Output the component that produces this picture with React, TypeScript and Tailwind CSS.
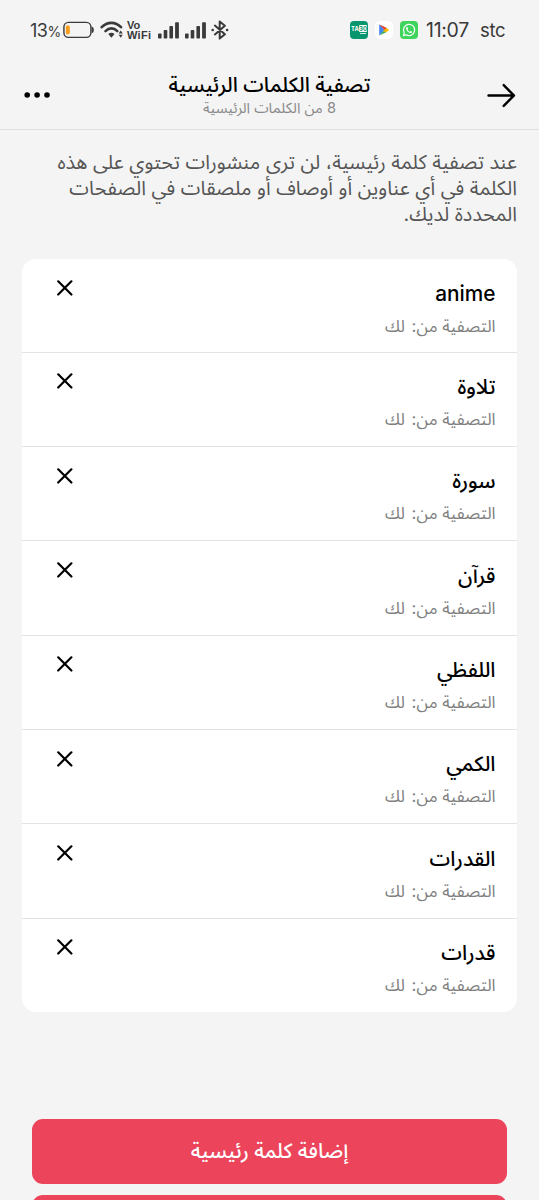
interface Keyword {
  id: number
  word: string
}

const keywords: Keyword[] = [
  { id: 1, word: 'anime' },
  { id: 2, word: 'تلاوة' },
  { id: 3, word: 'سورة' },
  { id: 4, word: 'قرآن' },
  { id: 5, word: 'اللفظي' },
  { id: 6, word: 'الكمي' },
  { id: 7, word: 'القدرات' },
  { id: 8, word: 'قدرات' },
]

const descriptionLines = [
  'عند تصفية كلمة رئيسية، لن ترى منشورات تحتوي على هذه',
  'الكلمة في أي عناوين أو أوصاف أو ملصقات في الصفحات',
  'المحددة لديك.',
]

function Signal() {
  return (
    <svg className="w-[21px] h-[17px]" viewBox="0 0 21 17" fill="#3a3a3a">
      <rect x="0" y="11.5" width="3.6" height="5" rx="0.8" />
      <rect x="5.7" y="8" width="3.6" height="8.5" rx="0.8" />
      <rect x="11.4" y="4" width="3.6" height="12.5" rx="0.8" />
      <rect x="17.1" y="0.3" width="3.8" height="16.2" rx="0.8" />
    </svg>
  )
}

function StatusBar() {
  return (
    <div className="h-[60px] pl-[30px] pr-[34px] flex items-center justify-between text-[#3a3a3a]">
      <div className="flex items-center">
        <span className="w-[33px] pt-px text-[18px] leading-none whitespace-nowrap tracking-[-0.5px]">
          13<span className="text-[14px] tracking-[-1px]">%</span>
        </span>
        <svg className="w-[31px] h-[18px]" viewBox="0 0 31 18" fill="none">
          <rect x="0.9" y="1.4" width="27" height="15" rx="4.6" stroke="#3a3a3a" strokeWidth="1.4" />
          <rect x="2.8" y="4.2" width="4" height="9.4" rx="2" fill="#f99d1c" />
          <path d="M28.6 5.6c1.6.4 2.2 1.6 2.2 3.3s-.6 2.9-2.2 3.3z" fill="#3a3a3a" />
        </svg>
        <svg className="ml-[6px] w-[24px] h-[18px]" viewBox="0 0 24 18" fill="none">
          <path d="M1.7 6.2C7.2.4 15.5.4 21 6.2" stroke="#3a3a3a" strokeWidth="2.6" strokeLinecap="round" />
          <path d="M5.5 10.1c3.6-3.6 8.3-3.6 11.8 0" stroke="#3a3a3a" strokeWidth="2.6" strokeLinecap="round" />
          <path d="M8.3 13c1.9-1.7 4.3-1.7 6.2 0l-3.1 3.8z" fill="#3a3a3a" />
          <path d="M18.6 12.4l2.1-2.8 2.1 2.8zM18.6 13.7l2.1 3 2.1-3z" fill="#3a3a3a" />
        </svg>
        <span className="ml-[3px] w-[26px] flex flex-col text-[11px] leading-[10.5px] font-bold whitespace-nowrap font-['Liberation_Sans',sans-serif]">
          <span>Vo</span>
          <span className="tracking-[0.3px]">WiFi</span>
        </span>
        <div className="ml-[5px] flex gap-[6px]">
          <Signal />
          <Signal />
        </div>
        <svg className="ml-[5px] w-[18px] h-[20px]" viewBox="0 0 18 20" fill="none">
          <path d="M3.9 5.6l10 8.7L8.7 18.6V1.4l5.2 4.3-10 8.7" stroke="#3a3a3a" strokeWidth="2" strokeLinejoin="round" strokeLinecap="round" />
          <circle cx="1.7" cy="10" r="1.3" fill="#3a3a3a" />
          <circle cx="16.1" cy="10" r="1.3" fill="#3a3a3a" />
        </svg>
      </div>

      <div className="flex items-center">
        <span className="w-[18px] h-[18px] rounded-[4px] bg-[#07966e] flex flex-col items-center justify-center font-bold text-white leading-none">
          <span className="text-[6px] leading-[6px] whitespace-nowrap">
            TA<span className="bg-white text-[#07966e] rounded-[1px]">30</span>
          </span>
          <span className="ml-[7px] w-[6px] h-px mt-px bg-white/80" />
        </span>
        <span className="ml-[7px] w-[18px] h-[18px] rounded-[5px] bg-white flex items-center justify-center">
          <svg className="w-[12px] h-[12px]" viewBox="0 0 12 12">
            <path d="M1.2.4v11.2L6.4 6z" fill="#4285f4" />
            <path d="M1.2.4L6.4 6l2.2-2z" fill="#4a8df0" />
            <path d="M1.2 11.6L6.4 6l2.2 2z" fill="#34a853" />
            <path d="M5 4.4L6.4 6 5 7.6 8.6 8l2.6-2-2.6-2-3.4-1.600z" fill="#fbbc04" />
            <path d="M1.2.4l7.400 3.600L6.400 6z" fill="#ea4335" />
          </svg>
        </span>
        <span className="ml-[7px] w-[18px] h-[18px] rounded-[4px] bg-[#3fd45c] flex items-center justify-center">
          <svg className="w-[14px] h-[14px]" viewBox="0 0 24 24" fill="none">
            <path d="M2.4 21.6l1.4-5a9.6 9.6 0 1 1 3.6 3.6z" stroke="#fff" strokeWidth="2" strokeLinejoin="round" />
            <path d="M8.3 6.8c-.8.3-1.5 1.2-1.4 2.5.3 3.8 4 7.4 7.7 7.9 1.5.1 2.6-.7 2.8-2.2l-2.7-1.5-1.3 1.4c-1.8-.7-3.2-2.1-4-3.9l1.1-1.3-1.2-2.8z" fill="#fff" />
          </svg>
        </span>
        <span className="ml-[8px] w-[43px] pt-[2px] text-[19.5px] leading-none whitespace-nowrap tracking-[-0.3px]">11:07</span>
        <span className="ml-[11px] w-[25px] pt-px text-[18.5px] leading-none tracking-[-0.3px]">stc</span>
      </div>
    </div>
  )
}

function Header() {
  return (
    <header className="h-[70px] pl-[24px] pr-[23px] flex items-center justify-between border-b border-[#e0e0e0]">
      <button aria-label="رجوع" className="w-[29px]">
        <svg className="w-[29px] h-[26px]" viewBox="0 0 29 26" fill="none" stroke="#000" strokeWidth="2.4" strokeLinecap="round" strokeLinejoin="round">
          <path d="M1.5 13.5H27M16.7 3.1L27 13.5 16.7 23.9" />
        </svg>
      </button>
      <div className="pt-[2px] pl-px flex flex-col items-center whitespace-nowrap">
        <h1 className="text-[20.6px] leading-[25px] text-black font-medium">تصفية الكلمات الرئيسية</h1>
        <p className="text-[14.6px] leading-[22px] text-[#8a8a8a]">8 من الكلمات الرئيسية</p>
      </div>
      <button aria-label="المزيد" className="w-[27px]">
        <svg className="w-[27px] h-[6px]" viewBox="0 0 27 6">
          <circle cx="3.2" cy="3" r="2.8" />
          <circle cx="13.1" cy="3" r="2.8" />
          <circle cx="23" cy="3" r="2.8" />
        </svg>
      </button>
    </header>
  )
}

function KeywordRow({ item }: { item: Keyword }) {
  return (
    <li className="h-[94.36px] first:h-[93.5px] last:h-[93.3px] pr-[21.5px] pl-[35px] flex justify-between border-b border-[#e3e3e3] last:border-b-0">
      <div className="pt-[20.5px] flex flex-col">
        <span className="text-[20.8px] leading-[28px] text-black font-medium">{item.word}</span>
        <span className="mt-[6px] text-[16.8px] leading-[24px] text-[#808080]">
          التصفية من: <span className="mr-[2px]">لك</span>
        </span>
      </div>
      <button aria-label="حذف" className="mt-[20.7px] w-[16px] h-[16px]">
        <svg className="w-[16px] h-[16px]" viewBox="0 0 16 16" stroke="#000" strokeWidth="2.2" strokeLinecap="round">
          <path d="M1.2 1.3l13.2 13.2M14.4 1.3L1.2 14.5" />
        </svg>
      </button>
    </li>
  )
}

export default function App() {
  return (
    <div className="w-[539px] h-[1200px] overflow-hidden bg-[#f4f4f4] font-['Inter','Noto_Sans_Arabic','DejaVu_Sans',sans-serif]">
      <StatusBar />
      <div dir="rtl">
        <Header />

        {/* الوصف */}
        <p className="mt-[19px] pr-[22px] flex flex-col text-[19.9px] leading-[26px] text-[#555] whitespace-nowrap">
          {descriptionLines.map((line) => (
            <span key={line}>{line}</span>
          ))}
        </p>

        {/* قائمة الكلمات */}
        <ul className="mt-[32px] mx-[22px] rounded-[14px] bg-white">
          {keywords.map((item) => (
            <KeywordRow key={item.id} item={item} />
          ))}
        </ul>

        <div className="mt-[107px] mx-[32px] flex flex-col gap-[11px]">
          <button className="h-[65px] pb-[2px] rounded-[11px] bg-[#eb445b] text-white text-[20.7px] font-medium">
            إضافة كلمة رئيسية
          </button>
          <div className="h-[65px] rounded-[11px] bg-[#eb445b]" />
        </div>
      </div>
    </div>
  )
}
